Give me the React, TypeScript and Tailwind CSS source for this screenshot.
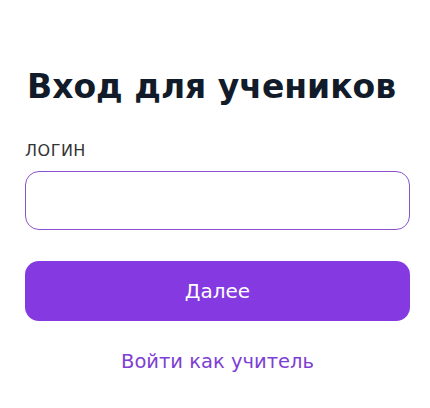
export default function App() {
  return (
    <div className="w-[430px] h-[408px] bg-white" style={{ fontFamily: '"DejaVu Sans", "Noto Sans", sans-serif' }}>
      <div className="pl-[25px] pr-[20px] pt-[65px] flex flex-col">
        <h1 className="text-[33px] leading-[44px] font-bold text-[#111b29] pl-[2px] whitespace-nowrap">Вход для учеников</h1>
        <div className="mt-[32px] text-[16px] leading-[20px] font-normal text-[#333333] tracking-[0.5px]">ЛОГИН</div>
        <input className="mt-[10px] h-[59px] w-full rounded-[14px] border border-[#8a52cc] outline-none px-4" />
        <button className="mt-[31px] h-[60px] w-full rounded-[14px] bg-[#8439e1] text-white text-[20px] font-medium">Далее</button>
        <div className="mt-[27px] text-center text-[19.5px] leading-[28px] text-[#7e40d2]">Войти как учитель</div>
      </div>
    </div>
  );
}
